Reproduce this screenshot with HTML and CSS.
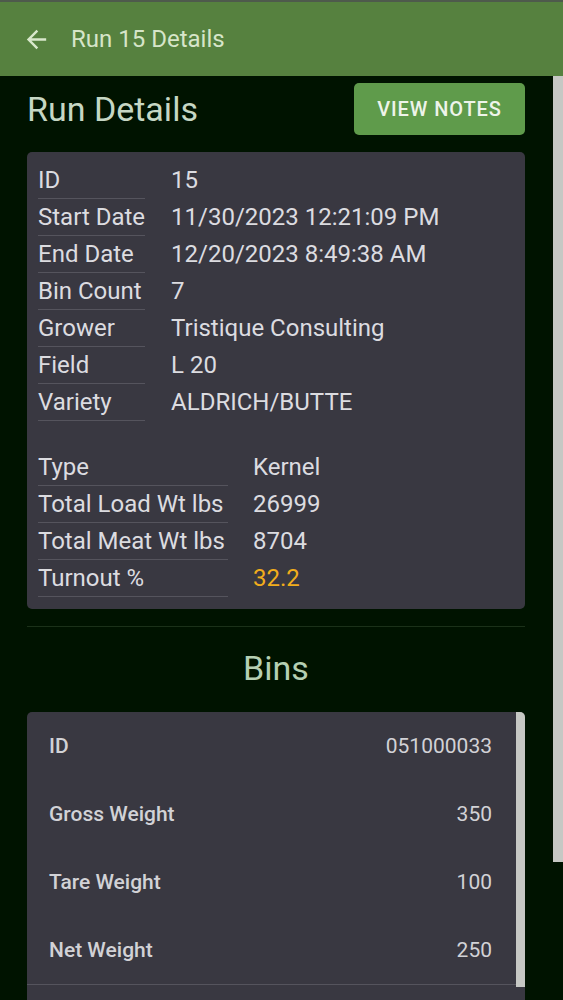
FILE: index.html
```html
<!DOCTYPE html>
<html>
<head>
    <title>Run 15 Details</title>
    <link rel="stylesheet" href="styles.css">
</head>
<body>
    <div class="app-bar">
        <svg class="back-icon" viewBox="0 0 24 24" width="29" height="29">
            <path d="M20 11H7.83l5.59-5.59L12 4l-8 8 8 8 1.41-1.41L7.83 13H20v-2z"/>
        </svg>
        <span class="app-title">Run 15 Details</span>
    </div>

    <div class="screen">
        <div class="content">
            <div class="title-row">
                <h1>Run Details</h1>
                <button class="button">View Notes</button>
            </div>

            <div class="details-card">
                <table class="details-table">
                    <tr><td class="label">ID</td><td>15</td></tr>
                    <tr><td class="label">Start Date</td><td>11/30/2023 12:21:09 PM</td></tr>
                    <tr><td class="label">End Date</td><td>12/20/2023 8:49:38 AM</td></tr>
                    <tr><td class="label">Bin Count</td><td>7</td></tr>
                    <tr><td class="label">Grower</td><td>Tristique Consulting</td></tr>
                    <tr><td class="label">Field</td><td>L 20</td></tr>
                    <tr><td class="label">Variety</td><td>ALDRICH/BUTTE</td></tr>
                </table>

                <table class="details-table totals">
                    <tr><td class="label">Type</td><td>Kernel</td></tr>
                    <tr><td class="label">Total Load Wt lbs</td><td>26999</td></tr>
                    <tr><td class="label">Total Meat Wt lbs</td><td>8704</td></tr>
                    <tr><td class="label">Turnout %</td><td class="turnout">32.2</td></tr>
                </table>
            </div>

            <hr class="divider">

            <h2>Bins</h2>

            <div class="bins-card">
                <div class="bins-list">
                    <div class="bin">
                        <div class="bin-row"><span>ID</span><span class="value">051000033</span></div>
                        <div class="bin-row"><span>Gross Weight</span><span class="value">350</span></div>
                        <div class="bin-row"><span>Tare Weight</span><span class="value">100</span></div>
                        <div class="bin-row"><span>Net Weight</span><span class="value">250</span></div>
                    </div>
                </div>
                <div class="bins-scroll">
                    <div class="bins-thumb"></div>
                </div>
            </div>
        </div>

        <div class="page-scroll">
            <div class="page-thumb"></div>
        </div>
    </div>
</body>
</html>
```

FILE: styles.css
```css
body {
    margin: 0;
    font-family: Roboto, "Noto Sans", sans-serif;
    background-color: #001300;
    color: #dcdce0;
    height: 1000px;
    overflow: hidden;
}

.app-bar {
    display: flex;
    align-items: center;
    height: 74px;
    padding-left: 22px;
    background-color: #56813f;
    border-top: 2px solid #4e5a4c;
}

.back-icon {
    fill: #d9e8cc;
}

.app-title {
    margin-left: 20px;
    font-size: 24px;
    color: #d6e5c9;
}

.screen {
    display: flex;
}

.content {
    flex: 1;
    padding: 7px 28px 0 27px;
}

.page-scroll {
    width: 10px;
}

.page-thumb {
    height: 786px;
    background-color: #c6c8c4;
}

.title-row {
    display: flex;
    justify-content: space-between;
    align-items: center;
}

h1 {
    margin: 0;
    font-size: 34px;
    font-weight: normal;
    color: #c6d7c4;
}

.button {
    width: 171px;
    height: 52px;
    font-family: Roboto, sans-serif;
    font-size: 20px;
    font-weight: 500;
    letter-spacing: 0.9px;
    text-transform: uppercase;
    color: #eef4ea;
    background-color: #5f9b4b;
    border: none;
    border-radius: 5px;
}

.details-card {
    margin-top: 17px;
    padding: 10px 11px 12px;
    background-color: #393841;
    border-radius: 5px;
}

.details-table {
    border-collapse: collapse;
    font-size: 24px;
}

.details-table td {
    height: 36px;
    padding: 0 0 0 26px;
    white-space: nowrap;
    vertical-align: middle;
}

.details-table td.label {
    padding-left: 0;
    border-bottom: 1px solid #55545d;
}

.totals {
    margin-top: 28px;
}

.totals td {
    padding-left: 25px;
}

.totals td.label {
    width: 190px;
}

.turnout {
    color: #f2ad1c;
}

.divider {
    margin: 17px 0 0;
    border: none;
    border-top: 1px solid #1b3119;
}

h2 {
    margin: 0;
    padding: 21px 0 24px;
    font-size: 34px;
    font-weight: normal;
    text-align: center;
    color: #b5cfb3;
}

.bins-card {
    display: flex;
    height: 288px;
    overflow: hidden;
    background-color: #393841;
    border-radius: 5px 5px 0 0;
}

.bins-list {
    flex: 1;
}

.bin {
    border-bottom: 1px solid #55545d;
}

.bin-row {
    display: flex;
    justify-content: space-between;
    align-items: center;
    height: 68px;
    padding: 0 24px 0 22px;
    font-size: 21px;
    font-weight: 500;
    color: #d2d2d6;
}

.bin-row .value {
    font-weight: normal;
}

.bins-scroll {
    width: 9px;
}

.bins-thumb {
    height: 275px;
    background-color: #c6c8c4;
}
```
